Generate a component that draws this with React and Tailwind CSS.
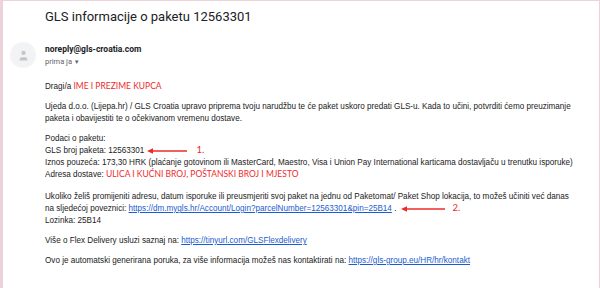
import { User } from 'lucide-react'

const RED = 'text-[#ee2a2a]'

function Arrow({ width = 40 }) {
  return (
    <svg width={width} height="6" viewBox={`0 0 ${width} 6`} className="inline-block align-middle">
      <line x1="4" y1="3" x2={width} y2="3" stroke="#ee2a2a" strokeWidth="1.6" />
      <polygon points="0,3 6,0.3 6,5.7" fill="#ee2a2a" />
    </svg>
  )
}

function Mark({ children }) {
  return <span className={`${RED} font-['Lato',sans-serif] text-[9.5px] leading-none`}>{children}</span>
}

function Link({ children }) {
  return <a className="text-[#1a5cd1] underline">{children}</a>
}

export default function App() {
  return (
    <div className="w-[600px] h-[288px] overflow-hidden bg-white border-l-[3px] border-t border-r border-[#ecd3da] text-[#222]">
      {/* naslov */}
      <h1 className="pl-[42px] pt-[7px] text-[13px] leading-[18px] font-['Roboto',sans-serif] text-[#202124]">
        GLS informacije o paketu 12563301
      </h1>

      {/* posiljatelj */}
      <div className="flex items-start mt-[16px]">
        <div className="ml-[7px] w-[26px] h-[26px] rounded-full bg-[#f1f3f4] flex items-center justify-center">
          <User size={13} strokeWidth={0} fill="#c4c7c9" className="text-[#c4c7c9]" />
        </div>
        <div className="ml-[9px] pt-[1px] font-['Roboto',sans-serif]">
          <p className="text-[8.5px] leading-[12px] font-bold text-[#202124]">noreply@gls-croatia.com</p>
          <p className="mt-[1px] text-[7.5px] leading-[12px] text-[#5f6368]">
            prima ja <span className="text-[6px]">▼</span>
          </p>
        </div>
      </div>

      {/* tijelo poruke */}
      <div className="pl-[42px] mt-[13px] font-['Liberation_Sans',Arial,sans-serif] text-[8.15px] leading-[12px] flex flex-col gap-[8px]">
        <p>
          Dragi/a <span className={`${RED} font-['Lato',sans-serif] text-[8.5px] leading-none`}>IME I PREZIME KUPCA</span>
        </p>
        <p>
          Ujeda d.o.o. (Lijepa.hr) / GLS Croatia upravo priprema tvoju narudžbu te će paket uskoro predati GLS-u. Kada to učini, potvrditi ćemo preuzimanje
          <br />
          paketa i obavijestiti te o očekivanom vremenu dostave.
        </p>
        <div>
          <p>Podaci o paketu:</p>
          <p>
            GLS broj paketa: 12563301
            <span className="ml-[3px]"><Arrow width={40} /></span>
            <span className="ml-[9px]"><Mark>1.</Mark></span>
          </p>
          <p>Iznos pouzeća: 173,30 HRK (plaćanje gotovinom ili MasterCard, Maestro, Visa i Union Pay International karticama dostavljaču u trenutku isporuke)</p>
          <p>
            Adresa dostave: <span className={`${RED} font-['Lato',sans-serif] text-[8.5px] leading-none`}>ULICA I KUĆNI BROJ, POŠTANSKI BROJ I MJESTO</span>
          </p>
        </div>
        <div className="mt-[2px]">
          <p>Ukoliko želiš promijeniti adresu, datum isporuke ili preusmjeriti svoj paket na jednu od Paketomat/ Paket Shop lokacija, to možeš učiniti već danas</p>
          <p>
            na sljedećoj poveznici: <Link>https://dm.mygls.hr/Account/Login?parcelNumber=12563301&amp;pin=25B14</Link> .
            <span className="ml-[5px]"><Arrow width={44} /></span>
            <span className="ml-[7px]"><Mark>2.</Mark></span>
          </p>
          <p>Lozinka: 25B14</p>
        </div>
        <p>
          Više o Flex Delivery usluzi saznaj na: <Link>https://tinyurl.com/GLSFlexdelivery</Link>
        </p>
        <p>
          Ovo je automatski generirana poruka, za više informacija možeš nas kontaktirati na: <Link>https://gls-group.eu/HR/hr/kontakt</Link>
        </p>
      </div>
    </div>
  )
}
